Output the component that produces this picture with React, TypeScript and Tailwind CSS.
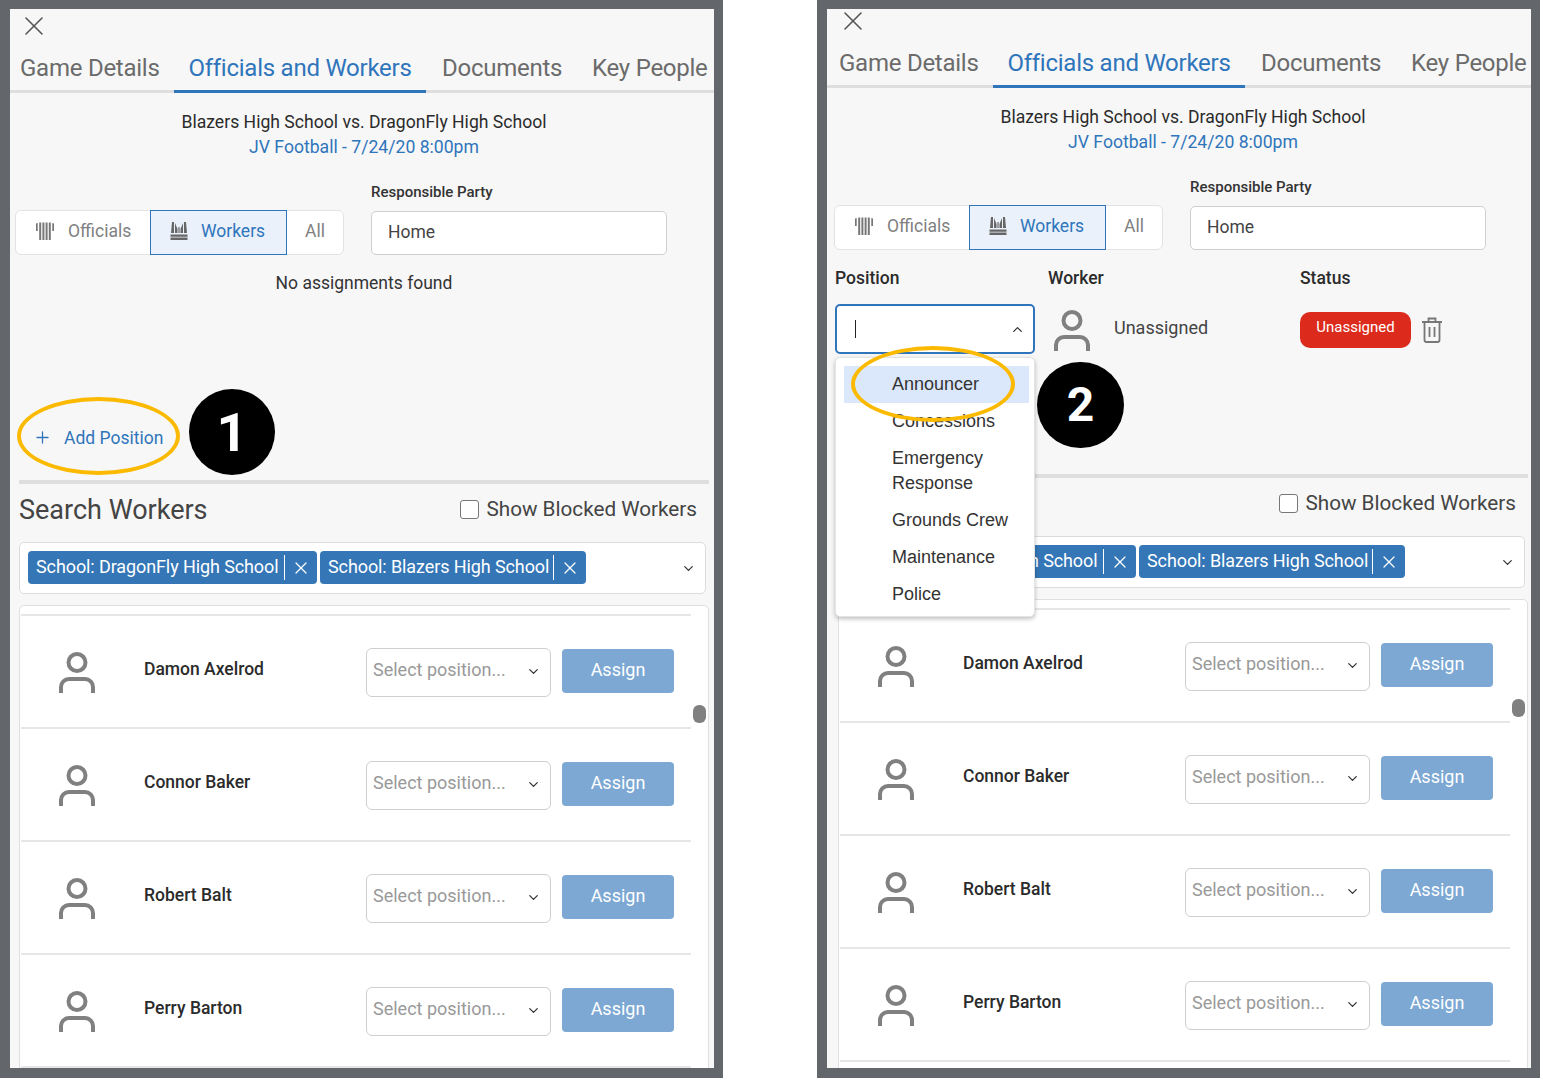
import React from 'react';
import { ChevronDown, ChevronUp, Plus, X } from 'lucide-react';

const workers = ['Damon Axelrod', 'Connor Baker', 'Robert Balt', 'Perry Barton'];
const positions = ['Concessions', 'Emergency Response', 'Grounds Crew', 'Maintenance', 'Police'];

const Avatar: React.FC = () => (
  <svg className="w-[38px] h-[42px] shrink-0" viewBox="0 0 38 42" fill="none" stroke="#808080" strokeWidth={4}>
    <circle cx="19" cy="10.5" r="8.5" />
    <path d="M3 41v-6a8 8 0 0 1 8-8h16a8 8 0 0 1 8 8v6" />
  </svg>
);

const OfficialsIcon: React.FC = () => (
  <svg className="w-5 h-[18px] mb-[3px]" viewBox="0 0 20 18" fill="#777" stroke="none">
    <path d="M1 1.5 2.7 1v8H1zM4.2.5h2V18h-2zM7.4.5h2V18h-2zM10.6.5h2V18h-2zM13.8.5h2V18h-2zM17.3 1l1.7.5v7.500h-1.700z" />
  </svg>
);

const WorkersIcon: React.FC = () => (
  <svg className="w-5 h-[18px] mb-[3px]" viewBox="0 0 20 18" fill="#666" stroke="none">
    <path d="M3 0h2v11H2zM6 1l2.500 6v4H6zM17 0h-2v11h3zM14 1l-2.500 6v4H14zM9.400 5h1.200v6H9.400zM1.500 12.500h17v2.200h-17zM1.500 15.500h17V18h-17z" />
  </svg>
);

const Chip: React.FC<{ label: string; width: string }> = ({ label, width }) => (
  <div className={`${width} h-[33px] -mt-px shrink-0 flex items-center pl-2 pr-[6px] rounded-[4px] bg-[#3476b6] text-white text-[18px] tracking-[-0.1px] whitespace-nowrap`}>
    <span className="flex-1 border-r border-white mr-[6px] h-[25px] flex items-center">
      <span className="-mt-[2px]">{label}</span>
    </span>
    <X className="w-5 h-5" strokeWidth={1.5} />
  </div>
);

const WorkerRow: React.FC<{ name: string }> = ({ name }) => (
  <div className="h-[113px] border-b-2 border-[#e6e6e6] flex items-center">
    <div className="w-[37px] shrink-0" />
    <div className="mt-[2px] shrink-0">
      <Avatar />
    </div>
    <div className="w-[48px] shrink-0" />
    <div className="w-[222px] shrink-0 -mt-[4px] text-[17.5px] font-medium text-[#2b2b2b]">{name}</div>
    <div className="mt-[2px] w-[185px] h-[49px] shrink-0 bg-white border border-[#cfcfcf] rounded-[6px] flex items-center justify-between pl-[6px] pr-[9px] text-[18px] text-[#999]">
      <span className="mb-[6px]">Select position...</span>
      <ChevronDown className="mb-[2px] w-[15px] h-[15px] text-[#333]" strokeWidth={2} />
    </div>
    <div className="mb-px ml-[11px] w-[112px] h-[44px] shrink-0 flex items-center justify-center rounded-[4px] bg-[#7ca8d3] text-white text-[18px]">
      <span className="mb-[4px]">Assign</span>
    </div>
  </div>
);

const AssignmentRow: React.FC = () => (
  <div className="pt-[15px] px-[6px] relative z-10">
    <div className="grid grid-cols-[213px_252px_1fr] h-5 items-center text-[17.5px] font-medium text-[#2b2b2b]">
      <span>Position</span>
      <span>Worker</span>
      <span>Status</span>
    </div>
    <div className="grid grid-cols-[213px_252px_1fr] mt-[19px]">
      <div className="relative">
        <div className="w-[200px] h-[50px] bg-white border-2 border-[#2f75bb] rounded-[5px] flex items-center justify-between pl-[18px] pr-[8px]">
          <span className="w-px h-[18px] bg-[#222]" />
          <ChevronUp className="w-[15px] h-[15px] text-[#333]" strokeWidth={2} />
        </div>
        <div className="absolute left-0 top-[53px] w-[200px] h-[260px] bg-white rounded-[5px] border border-[#e4e4e4] shadow-[0_2px_4px_rgba(0,0,0,0.25)] pt-2 pl-2 pr-[5px] font-['Liberation_Sans',sans-serif] text-[18px] leading-[25px] text-[#333]">
          <div className="h-[37px] bg-[#dbe8fc] flex items-center pl-[48px]">Announcer</div>
          {positions.map((p) => (
            <div key={p} className="pl-[48px] py-[6px] w-[170px]">{p}</div>
          ))}
        </div>
      </div>
      <div className="flex items-start pt-[6px] pl-[5px]">
        <Avatar />
        <span className="ml-[23px] mt-[4px] text-[18px] text-[#444]">Unassigned</span>
      </div>
      <div className="flex items-start pt-2">
        <div className="w-[111px] h-[36px] rounded-[10px] bg-[#dc2a1c] text-white text-[15px] flex items-center justify-center">
          <span className="mb-[5px]">Unassigned</span>
        </div>
        <svg className="ml-[10px] mt-[5px] w-[22px] h-[26px]" viewBox="0 0 22 26" fill="none" stroke="#777" strokeWidth={1.8}>
          <path d="M1 5h20M7.5 5V1.5h7V5M3.5 5v18a2 2 0 0 0 2 2h11a2 2 0 0 0 2-2V5M8.5 10v10M13.5 10v10" />
        </svg>
      </div>
    </div>
  </div>
);

const Panel: React.FC<{ step: 1 | 2 }> = ({ step }) => (
  <div className="relative w-[723px] h-[1078px] shrink-0 overflow-hidden border-t-[9px] border-b-[10px] border-l-[10px] border-r-[9px] border-[#63666b] bg-[#f7f7f7]">
    <div className={step === 2 ? '-mt-[5px] pl-[2px] w-[706px]' : ''}>
      {/* Close */}
      <div className="h-[34px] pl-2 flex items-center">
        <X className="w-8 h-8 text-[#555]" strokeWidth={1.2} />
      </div>

      {/* Tabs */}
      <div className={`h-[50px] flex border-b-[3px] border-[#dedede] text-[24px] tracking-[-0.25px] text-[#6b6b6b] whitespace-nowrap ${step === 2 ? '-ml-[2px] pl-[2px]' : ''}`}>
        <div className="w-[164px] pl-[10px] pt-[7px]">Game Details</div>
        <div className="w-[252px] h-[50px] pt-[7px] text-center text-[#2f75bb] border-b-[3px] border-[#2f75bb]">Officials and Workers</div>
        <div className="w-[166px] pl-[16px] pt-[7px]">Documents</div>
        <div className="pt-[7px]">Key People</div>
      </div>

      {/* Game heading */}
      <div className="pt-[17px] text-center text-[17.6px] leading-[25px] pl-1">
        <div className="text-[#2b2b2b]">Blazers High School vs. DragonFly High School</div>
        <div className="text-[#2f75bb]">JV Football - 7/24/20 8:00pm</div>
      </div>

      {/* Toggle and responsible party */}
      <div className="mt-[22px] pl-[5px] flex items-end">
        <div className="w-[329px] h-[45px] flex bg-white border border-[#e3e3e3] rounded-[6px] text-[17.5px] text-[#808080]">
          <div className="w-[134px] flex items-center pl-[19px] gap-[13px]">
            <OfficialsIcon />
            <span className="mb-[2px]">Officials</span>
          </div>
          <div className="w-[137px] -my-px flex items-center pl-[18px] gap-[12px] bg-[#eaf1fa] border border-[#2f75bb] text-[#2f75bb]">
            <WorkersIcon />
            <span className="mb-[2px]">Workers</span>
          </div>
          <div className="flex-1 flex items-center justify-center">
            <span className="mb-[2px]">All</span>
          </div>
        </div>
        <div className="ml-[27px]">
          <div className="h-5 mb-[9px] text-[15px] text-[#333] font-medium flex items-center">
            <span className="mt-[1px]">Responsible Party</span>
          </div>
          <div className="w-[296px] h-[44px] bg-white border border-[#cfcfcf] rounded-[5px] flex items-center pl-4 text-[17.5px] text-[#444]">
            <span className="mb-[2px]">Home</span>
          </div>
        </div>
      </div>

      {/* Assignments */}
      <div className={step === 1 ? 'h-[225px]' : 'h-[224px]'}>
        {step === 1 ? (
          <div className="h-full flex flex-col justify-between">
            <div className="pt-[18px] h-[38px] text-center text-[17.5px] leading-5 text-[#333] pl-1">No assignments found</div>
            <div className="pb-[29px] pl-[23px] flex items-center gap-[12px] text-[17.5px] text-[#2f75bb]">
              <Plus className="w-[19px] h-[19px]" strokeWidth={1.6} />
              <span>Add Position</span>
            </div>
          </div>
        ) : (
          <AssignmentRow />
        )}
      </div>

      {/* Search workers */}
      <div className="h-1 ml-[9px] mr-[5px] bg-[#dedede]" />
      <div className="mt-2 h-9 ml-[9px] mr-[17px] flex items-center justify-between">
        <span className="text-[27px] text-[#444]">Search Workers</span>
        <label className="flex items-center gap-[7px] text-[20.7px] text-[#444]">
          <span className="w-[19px] h-[19px] bg-white border border-[#777] rounded-[3px]" />
          Show Blocked Workers
        </label>
      </div>
      <div className="mt-[14px] ml-[9px] w-[687px] h-[52px] bg-white border border-[#dcdcdc] rounded-[5px] flex items-center pl-2 pr-[9px] gap-[3px]">
        <Chip label="School: DragonFly High School" width="w-[289px]" />
        <Chip label="School: Blazers High School" width="w-[266px]" />
        <ChevronDown className="ml-auto w-[15px] h-[15px] text-[#333]" strokeWidth={2} />
      </div>

      {/* Worker list */}
      <div className="relative mt-[11px] ml-[9px] mr-[5px] h-[500px] bg-white border border-[#e0e0e0] rounded-[5px] pt-2 pl-px pr-[17px]">
        <div className="border-t-2 border-[#e6e6e6]">
          {workers.map((w) => (
            <WorkerRow key={w} name={w} />
          ))}
        </div>
        <div className="absolute right-[2px] top-[99px] w-[13px] h-[18px] rounded-md bg-[#808080]" />
      </div>
    </div>

    {/* Annotations */}
    {step === 1 ? (
      <>
        <div className="absolute left-[7px] top-[388px] w-[163px] h-[78px] rounded-[50%] border-[4.5px] border-[#fbb900]" />
        <div className="absolute left-[179px] top-[380px] w-[86px] h-[86px] rounded-full bg-black text-white text-[54px] font-bold flex items-center justify-center">1</div>
      </>
    ) : (
      <>
        <div className="absolute z-20 left-[24px] top-[337px] w-[164px] h-[76px] rounded-[50%] border-[4.5px] border-[#fbb900]" />
        <div className="absolute z-20 left-[210px] top-[353px] w-[87px] h-[86px] rounded-full bg-black text-white text-[48px] font-bold flex items-center justify-center">2</div>
      </>
    )}
  </div>
);

const App: React.FC = () => {
  return (
    <div className="w-[1543px] h-[1080px] overflow-hidden bg-white flex font-['Roboto',sans-serif]">
      <Panel step={1} />
      <div className="w-[94px] shrink-0" />
      <Panel step={2} />
    </div>
  );
};

export default App;
